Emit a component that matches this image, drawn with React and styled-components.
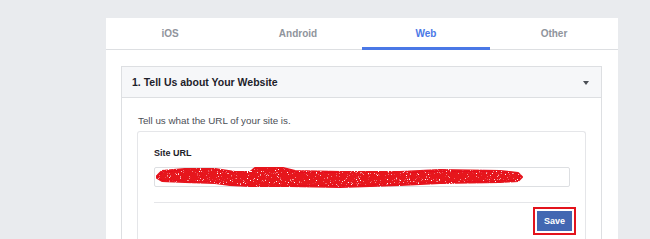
import React from "react";
import styled, { createGlobalStyle } from "styled-components";

const Global = createGlobalStyle`
  html, body { margin: 0; padding: 0; background: #e9ebee; }
  body { font-family: "Liberation Sans", Arial, sans-serif; }
`;

const Page = styled.div`
  padding: 18px 0 0 106px;
  height: 221px;
  overflow: hidden;
`;

const Card = styled.div`
  width: 512px;
  background: #fff;
  padding-bottom: 40px;
`;

const Tabs = styled.div`
  display: flex;
  height: 31px;
  border-bottom: 1px solid #dddfe2;
`;

const Tab = styled.div`
  flex: 1;
  display: flex;
  align-items: center;
  justify-content: center;
  font-size: 10px;
  font-weight: bold;
  color: ${(p) => (p.$active ? "#4a78e6" : "#90949c")};
  position: relative;
  &::after {
    content: "";
    display: ${(p) => (p.$active ? "block" : "none")};
    position: absolute;
    left: 0;
    right: 0;
    bottom: -1px;
    height: 3px;
    background: #4a78e6;
  }
`;

const Content = styled.div`
  padding: 16px 16px 0 15px;
`;

const Panel = styled.div`
  border: 1px solid #dddfe2;
  border-bottom: none;
`;

const PanelHeader = styled.div`
  display: flex;
  align-items: center;
  justify-content: space-between;
  height: 30px;
  padding: 0 12px 0 10px;
  background: #f6f7f9;
  border-bottom: 1px solid #dddfe2;
  font-size: 10.5px;
  font-weight: bold;
  color: #1d2129;
`;

const Caret = styled.span`
  width: 0;
  height: 0;
  border-left: 3px solid transparent;
  border-right: 3px solid transparent;
  border-top: 4px solid #4b4f56;
  margin-top: 2px;
`;

const PanelBody = styled.div`
  padding: 17px 15px 0 15px;
`;

const Intro = styled.div`
  font-size: 9.8px;
  color: #4b4f56;
  line-height: 12px;
  margin-bottom: 4px;
  padding-left: 1px;
`;

const Box = styled.div`
  border: 1px solid #e5e6e9;
  border-bottom: none;
  border-radius: 3px 3px 0 0;
  padding: 15px 15px 20px 16px;
`;

const Label = styled.div`
  font-size: 9px;
  font-weight: bold;
  color: #1d2129;
  line-height: 12px;
  margin-bottom: 8px;
`;

const InputWrap = styled.div`
  position: relative;
  height: 18px;
  border: 1px solid #dddfe2;
  border-radius: 2px;
`;

const Scribble = styled.svg`
  position: absolute;
  left: -1px;
  top: -1px;
  overflow: visible;
`;

const Divider = styled.div`
  border-top: 1px solid #e5e6e9;
  margin-top: 15px;
`;

const Actions = styled.div`
  display: flex;
  justify-content: flex-end;
  padding-top: 8px;
`;

const SaveButton = styled.button`
  width: 35px;
  height: 20px;
  margin-right: -2px;
  background: #4267b2;
  border: 1px solid #4267b2;
  color: #fff;
  font-family: "Liberation Sans", Arial, sans-serif;
  font-size: 9px;
  font-weight: bold;
  padding: 0;
  outline: 2px solid #e3131c;
  outline-offset: 2px;
`;

const scribblePath =
  "M3 9 L8 4 L31 2 L61 2 L81 5 L96 5 L101 1 L129 1 L141 4 L186 5 L246 5 L286 3 L346 4 L364 6 L368 10 " +
  "L364 14 L346 15 L286 16 L246 18 L186 20 L136 19 L96 19 L76 18 L61 16 L31 15 L8 14 L3 11 Z";

export default function App() {
  return (
    <>
      <Global />
      <Page>
        <Card>
          <Tabs>
            <Tab>iOS</Tab>
            <Tab>Android</Tab>
            <Tab $active>Web</Tab>
            <Tab>Other</Tab>
          </Tabs>
          <Content>
            <Panel>
              <PanelHeader>
                <span>1. Tell Us about Your Website</span>
                <Caret />
              </PanelHeader>
              <PanelBody>
                <Intro>Tell us what the URL of your site is.</Intro>
                <Box>
                  <Label>Site URL</Label>
                  <InputWrap>
                    <Scribble width="418" height="20" viewBox="0 0 418 20">
                      <defs>
                        <filter id="grain" x="-5%" y="-20%" width="110%" height="140%">
                          <feTurbulence type="fractalNoise" baseFrequency="0.9" numOctaves="2" seed="4" result="n" />
                          <feColorMatrix
                            in="n"
                            type="matrix"
                            values="0 0 0 0 0  0 0 0 0 0  0 0 0 0 0  0 0 0 -8 6.2"
                            result="mask"
                          />
                          <feComposite in="SourceGraphic" in2="mask" operator="in" />
                        </filter>
                      </defs>
                      <path
                        d={scribblePath}
                        fill="#e6121c"
                        stroke="#e6121c"
                        strokeWidth="2"
                        strokeLinejoin="round"
                        filter="url(#grain)"
                      />
                    </Scribble>
                  </InputWrap>
                  <Divider />
                  <Actions>
                    <SaveButton>Save</SaveButton>
                  </Actions>
                </Box>
              </PanelBody>
            </Panel>
          </Content>
        </Card>
      </Page>
    </>
  );
}
